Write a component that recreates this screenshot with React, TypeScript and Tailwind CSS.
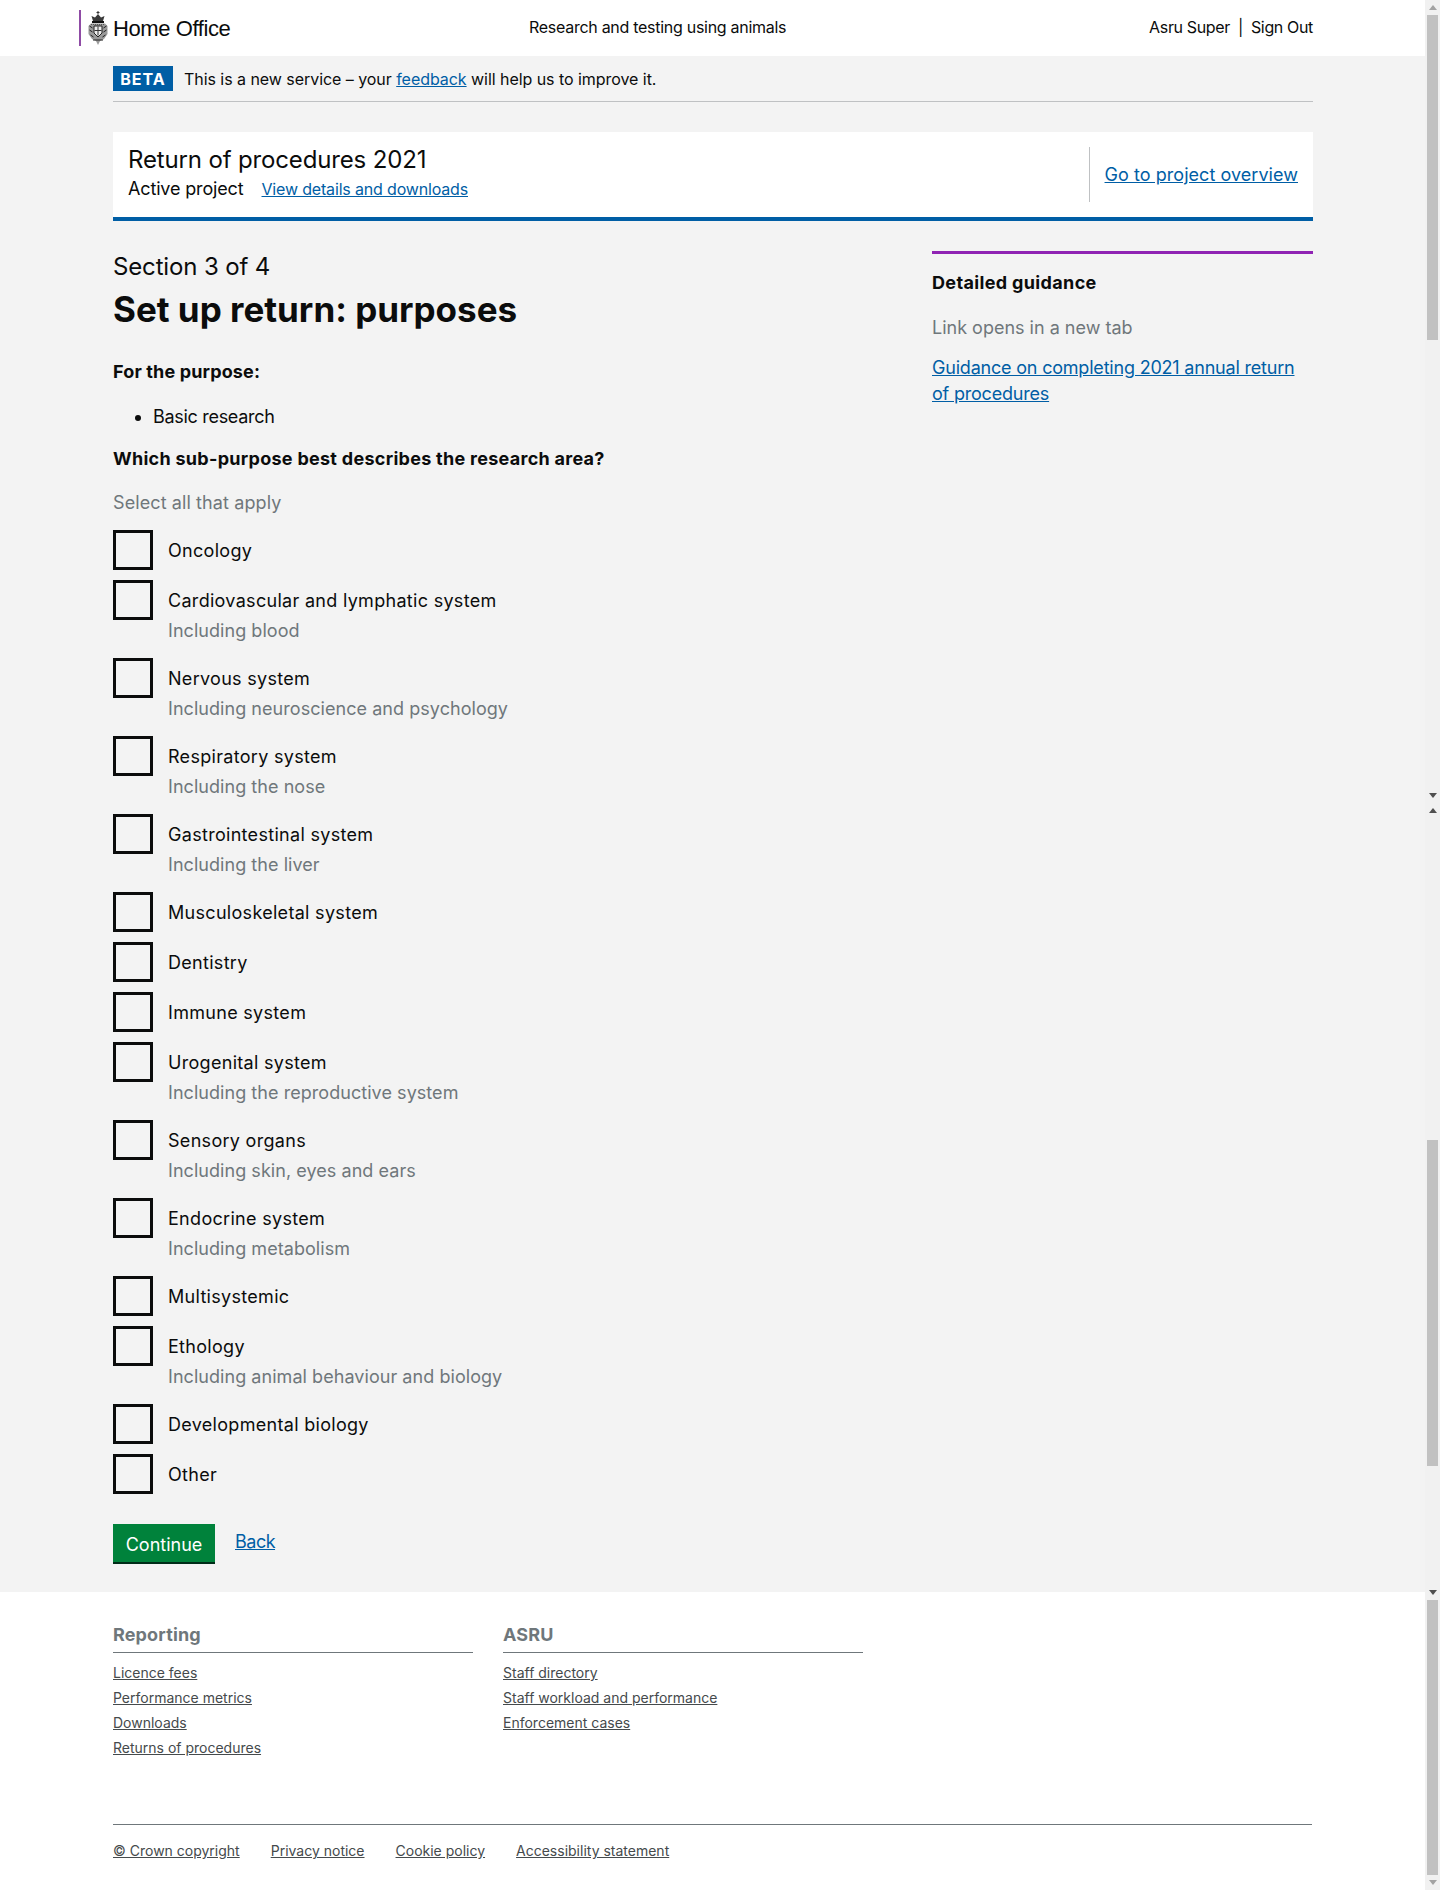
const subPurposes = [
  { label: "Oncology" },
  { label: "Cardiovascular and lymphatic system", hint: "Including blood" },
  { label: "Nervous system", hint: "Including neuroscience and psychology" },
  { label: "Respiratory system", hint: "Including the nose" },
  { label: "Gastrointestinal system", hint: "Including the liver" },
  { label: "Musculoskeletal system" },
  { label: "Dentistry" },
  { label: "Immune system" },
  { label: "Urogenital system", hint: "Including the reproductive system" },
  { label: "Sensory organs", hint: "Including skin, eyes and ears" },
  { label: "Endocrine system", hint: "Including metabolism" },
  { label: "Multisystemic" },
  { label: "Ethology", hint: "Including animal behaviour and biology" },
  { label: "Developmental biology" },
  { label: "Other" },
];

const footerColumns = [
  { title: "Reporting", links: ["Licence fees", "Performance metrics", "Downloads", "Returns of procedures"] },
  { title: "ASRU", links: ["Staff directory", "Staff workload and performance", "Enforcement cases"] },
];

function Crest() {
  return (
    <svg width="20" height="34" viewBox="0 0 20 34" className="shrink-0">
      <path d="M10 0v3M8.5 1.5h3" stroke="#333" strokeWidth="1" />
      <path d="M5 10 L3.5 5 L7 6.5 L10 3 L13 6.5 L16.5 5 L15 10 Z" fill="#3a3a3a" />
      <rect x="4" y="10" width="12" height="2" fill="#111" />
      <path d="M3 12.5 H17 L19.5 15 V23 L16 28 L12 30 L10 34 L8 30 L4 28 L0.5 23 V15 Z" fill="#9a9a9a" />
      <path d="M6 15h8v7l-4 4-4-4z" fill="#eee" stroke="#222" strokeWidth="1" />
      <path d="M10 15.5v9M6.500 19.500h7" stroke="#333" strokeWidth="1" />
      <path d="M1.500 15l3 2M1.500 19l3 2M2.500 24l3 2M18.500 15l-3 2M18.500 19l-3 2M17.500 24l-3 2M5 29h10" stroke="#222" strokeWidth="1" />
      <path d="M3 13.500h14" stroke="#555" strokeWidth="1" strokeDasharray="1 1" />
    </svg>
  );
}

function ScrollArrow({ up, dark }: { up?: boolean; dark?: boolean }) {
  return (
    <div className="flex h-[15px] items-center justify-center">
      <svg width="8" height="5" viewBox="0 0 8 5">
        <path d={up ? "M4 0L8 5H0Z" : "M0 0H8L4 5Z"} fill={dark ? "#505050" : "#a3a3a3"} />
      </svg>
    </div>
  );
}

function Scrollbars() {
  return (
    <div className="flex w-[15px] shrink-0 flex-col bg-[#f1f1f1]">
      <div className="flex h-[803px] flex-col">
        <ScrollArrow up />
        <div className="mx-[2px] h-[325px] bg-[#c1c1c1]" />
        <div className="flex-1" />
        <ScrollArrow dark />
      </div>
      <div className="flex h-[797px] flex-col">
        <ScrollArrow up dark />
        <div className="h-[322px]" />
        <div className="mx-[2px] h-[326px] bg-[#c1c1c1]" />
        <div className="flex-1" />
        <ScrollArrow dark />
      </div>
      <div className="flex flex-1 flex-col">
        <div className="mx-[2px] h-[275px] bg-[#c1c1c1]" />
        <ScrollArrow />
      </div>
    </div>
  );
}

export default function App() {
  return (
    <div className="flex h-[1890px] w-[1440px] overflow-hidden bg-[#f3f3f3] font-['Inter',sans-serif] text-[#0b0c0c]">
      <div className="flex w-[1425px] flex-col">
        <header className="flex h-[56px] items-center bg-white pl-[79px] pr-[112px]">
          <div className="flex h-[36px] w-[450px] items-center gap-[5px] border-l-2 border-[#8f4ba5] pl-[7px]">
            <Crest />
            <span className="font-['Liberation_Sans',sans-serif] text-[22px] tracking-[-0.4px]">Home Office</span>
          </div>
          <span className="pb-[2px] text-base tracking-[-0.28px]">Research and testing using animals</span>
          <div className="ml-auto flex gap-[8px] pb-[2px] text-base tracking-[-0.35px]">
            <span>Asru Super</span>
            <span>|</span>
            <span>Sign Out</span>
          </div>
        </header>

        <main className="mx-[113px] flex w-[1200px] flex-1 flex-col">
          <div className="mt-[10px] flex h-[36px] items-start gap-[11px] border-b border-[#bfc1c3]">
            <span className="flex h-[25px] w-[60px] items-center justify-center bg-[#005ea5] text-base font-bold tracking-[1px] text-white">BETA</span>
            <span className="pt-[1px] text-base leading-[25px] tracking-[-0.05px]">
              This is a new service – your <a href="#" className="text-[#005ea5] underline">feedback</a> will help us to improve it.
            </span>
          </div>

          <div className="mt-[30px] flex h-[89px] items-center justify-between border-b-4 border-[#005ea5] bg-white px-[15px]">
            <div className="pb-[1px]">
              <h2 className="text-2xl leading-[30px] tracking-[-0.15px]">Return of procedures 2021</h2>
              <div className="flex items-baseline gap-[18px] leading-[28px]">
                <span className="text-lg tracking-[-0.15px]">Active project</span>
                <a href="#" className="text-base tracking-[-0.17px] text-[#005ea5] underline">View details and downloads</a>
              </div>
            </div>
            <div className="flex h-[55px] items-center border-l border-[#bfc1c3] pl-[15px]">
              <a href="#" className="text-lg tracking-[0.05px] text-[#005ea5] underline">Go to project overview</a>
            </div>
          </div>

          <div className="flex flex-1 justify-between">
            <div className="w-[790px]">
              <p className="mt-[31px] text-2xl leading-[30px] tracking-[-0.15px]">Section 3 of 4</p>
              <h1 className="text-[35px] leading-[55px] font-bold">Set up return: purposes</h1>
              <p className="mt-[22px] text-lg leading-[25px] font-bold tracking-[0.15px]">For the purpose:</p>
              <ul className="mt-[20px] list-disc pl-[40px] text-lg leading-[25px] tracking-[-0.3px]">
                <li>Basic research</li>
              </ul>
              <p className="mt-[17px] text-lg leading-[25px] font-bold tracking-[0.28px]">Which sub-purpose best describes the research area?</p>
              <p className="mt-[19px] text-lg leading-[25px] tracking-[0.1px] text-[#6f777b]">Select all that apply</p>

              <div className="mt-[15px] flex flex-col gap-[10px]">
                {subPurposes.map((item) => (
                  <label key={item.label} className="flex gap-[15px]">
                    <span className="h-[40px] w-[40px] shrink-0 border-[3px] border-[#0b0c0c]" />
                    <span className="pt-[8px] text-lg leading-[25px] tracking-[0.3px]">
                      {item.label}
                      {item.hint && <span className="mt-[5px] mb-[5px] block tracking-[0.05px] text-[#6f777b]">{item.hint}</span>}
                    </span>
                  </label>
                ))}
              </div>

              <div className="mt-[30px] flex items-start gap-[20px]">
                <button className="h-[40px] w-[102px] border-b-2 border-[#002d18] bg-[#00823b] pt-[3px] text-lg text-white">Continue</button>
                <a href="#" className="mt-[4px] text-lg tracking-[-0.5px] text-[#005ea5] underline">Back</a>
              </div>
            </div>

            <aside className="w-[381px]">
              <div className="mt-[30px] border-t-[3px] border-[#8f23b3] pt-[16px]">
                <h3 className="text-lg leading-[25px] font-bold tracking-[0.35px]">Detailed guidance</h3>
                <p className="mt-[20px] text-lg leading-[25px] text-[#6f777b]">Link opens in a new tab</p>
                <a href="#" className="mt-[15px] block text-lg leading-[26px] tracking-[-0.2px] text-[#005ea5] underline">
                  Guidance on completing 2021 annual return of procedures
                </a>
              </div>
            </aside>
          </div>
        </main>

        <footer className="h-[298px] bg-white px-[113px] pt-[31px]">
          <div className="flex h-[201px] gap-[30px]">
            {footerColumns.map((col) => (
              <div key={col.title} className="w-[360px]">
                <h4 className="border-b border-[#6f777b] pb-[5px] text-lg leading-[24px] font-bold tracking-[0.15px] text-[#6f777b]">{col.title}</h4>
                <ul className="mt-[7px] flex flex-col text-sm leading-[25px] text-[#454a4c]">
                  {col.links.map((link) => (
                    <li key={link}>
                      <a href="#" className="underline">{link}</a>
                    </li>
                  ))}
                </ul>
              </div>
            ))}
          </div>
          <div className="flex gap-[31px] border-t border-[#6f777b] pt-[13px] text-sm leading-[25px] text-[#454a4c]">
            <a href="#" className="underline">© Crown copyright</a>
            <a href="#" className="underline">Privacy notice</a>
            <a href="#" className="underline">Cookie policy</a>
            <a href="#" className="underline">Accessibility statement</a>
          </div>
        </footer>
      </div>
      <Scrollbars />
    </div>
  );
}
